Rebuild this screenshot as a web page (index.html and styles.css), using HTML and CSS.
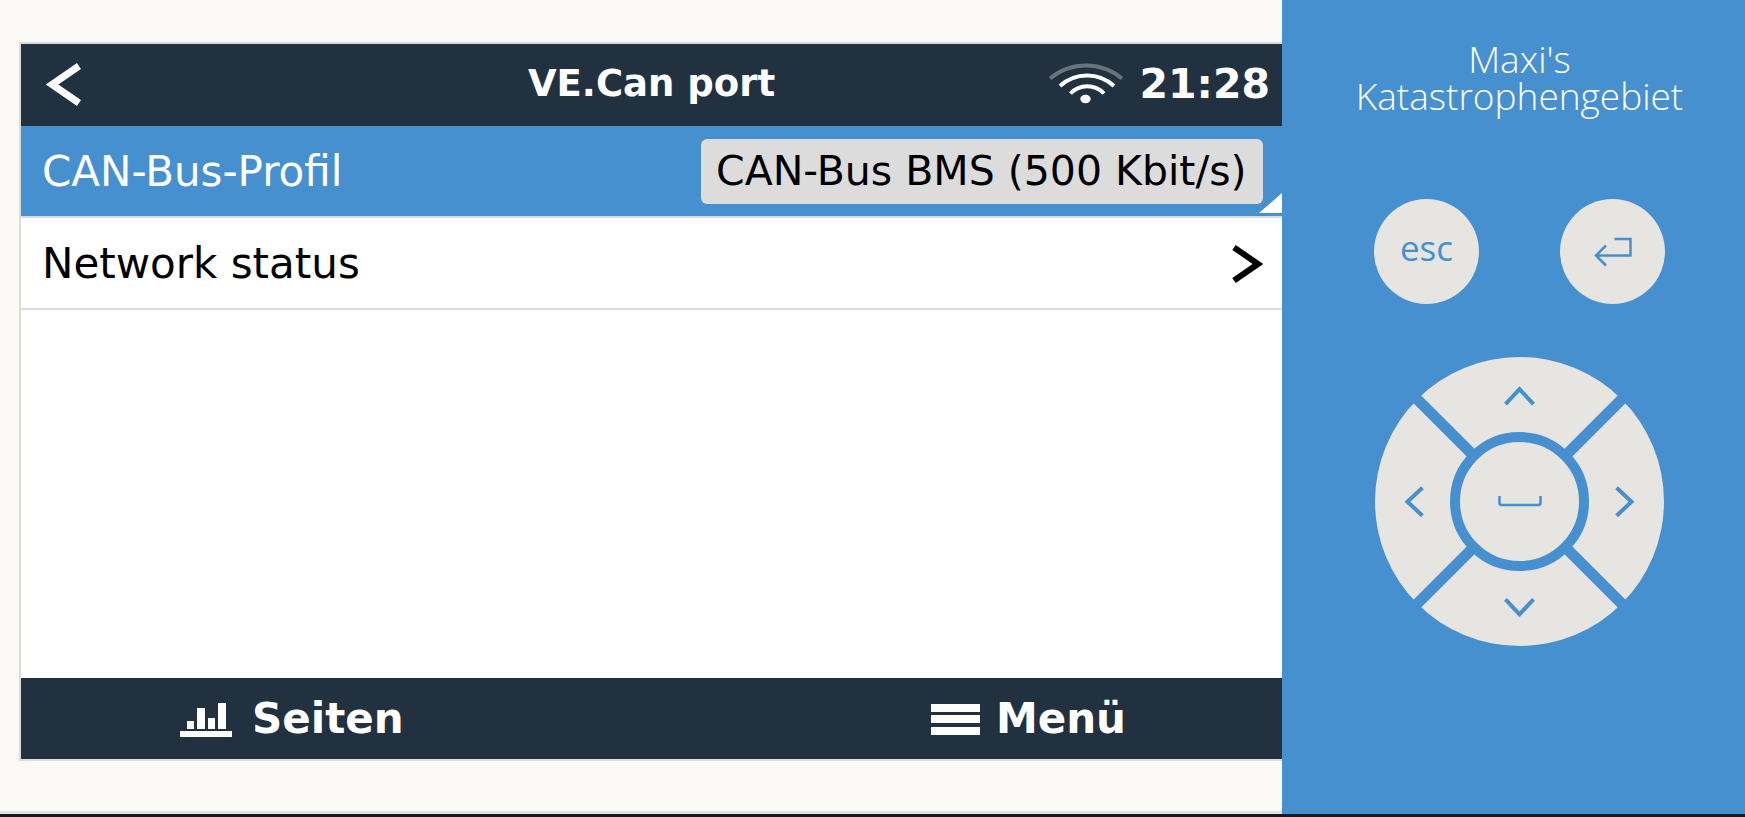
FILE: index.html
```
<!DOCTYPE html>
<html lang="de">
<head>
    <meta charset="UTF-8">
    <title>VE.Can port</title>
    <link rel="stylesheet" href="styles.css">
</head>
<body>
<div class="page">
    <main class="stage">
        <div class="screen">
            <header class="bar header">
                <button class="back" type="button" aria-label="Zurück">
                    <svg width="38" height="44" viewBox="0 0 38 44"><path d="M34 4L7 22.500L34 41" fill="none" stroke="#fff" stroke-width="7"/></svg>
                </button>
                <h1>VE.Can port</h1>
                <div class="status">
                    <svg width="78" height="48" viewBox="6 10 78 48" fill="none" stroke="#fff" stroke-width="4">
                        <path d="M9 28.500A56 56 0 0 1 81 28.500" stroke="#68737e"/>
                        <path d="M19 36A40 40 0 0 1 73 36"/>
                        <path d="M29.500 43.500A23 23 0 0 1 63 43.500"/>
                        <ellipse cx="44.500" cy="49" rx="5.200" ry="4.200" fill="#fff" stroke="none"/>
                    </svg>
                    <span class="clock">21:28</span>
                </div>
            </header>
            <ul class="list">
                <li class="row active">
                    <label for="profile">CAN-Bus-Profil</label>
                    <select id="profile" class="profile">
                        <option>CAN-Bus BMS (500 Kbit/s)</option>
                    </select>
                    <span class="corner"></span>
                </li>
                <li>
                    <a class="row" href="#network">
                        Network status
                        <svg width="32" height="40" viewBox="0 0 32 40"><path d="M3 4.500L27 21L3 37.500" fill="none" stroke="#000" stroke-width="6"/></svg>
                    </a>
                </li>
            </ul>
            <footer class="bar footer">
                <button type="button">
                    <svg width="56" height="36" viewBox="0 0 56 36" fill="#fff">
                        <rect x="7" y="20" width="7" height="8"/>
                        <rect x="17" y="7" width="8" height="21"/>
                        <rect x="28" y="17" width="7" height="11"/>
                        <rect x="38" y="2" width="8" height="26"/>
                        <rect x="0" y="30" width="52" height="6"/>
                    </svg>
                    Seiten
                </button>
                <button type="button">
                    <svg width="49" height="34" viewBox="0 0 49 34" fill="#fff">
                        <rect y="2" width="49" height="8"/>
                        <rect y="13" width="49" height="8"/>
                        <rect y="25" width="49" height="8"/>
                    </svg>
                    Menü
                </button>
            </footer>
        </div>
    </main>
    <aside class="keypad">
        <p class="name">Maxi's<br>Katastrophengebiet</p>
        <div class="keys">
            <button class="key esc" type="button">esc</button>
            <button class="key" type="button" aria-label="Enter">
                <svg width="38" height="30" viewBox="0 0 38 30"><path d="M20.500 2H36.500V18.500H2M12 8.500L2 18.500L12 28.500" fill="none" stroke="#4790d0" stroke-width="2.500"/></svg>
            </button>
        </div>
        <div class="dpad">
            <div class="ring">
                <button type="button" aria-label="Hoch"><svg width="32" height="32" viewBox="0 0 32 32"><path d="M2 24L16 9L30 24"/></svg></button>
                <button type="button" aria-label="Rechts"><svg width="32" height="32" viewBox="0 0 32 32"><path d="M7 1.500L22 15.500L7 29.500"/></svg></button>
                <button type="button" aria-label="Links"><svg width="32" height="32" viewBox="0 0 32 32"><path d="M25 1.500L10 15.500L25 29.500"/></svg></button>
                <button type="button" aria-label="Runter"><svg width="32" height="32" viewBox="0 0 32 32"><path d="M2 7L16 22L30 7"/></svg></button>
            </div>
            <button class="space" type="button" aria-label="Leertaste">
                <svg width="44" height="14" viewBox="0 0 44 14"><path d="M1.500 1V8Q1.500 10 3.500 10H40.500Q42.500 10 42.500 8V1" fill="none" stroke="#4790d0" stroke-width="2.500"/></svg>
            </button>
        </div>
    </aside>
</div>
</body>
</html>
```

FILE: styles.css
```
* {
    margin: 0;
    padding: 0;
    box-sizing: border-box;
}
body {
    font-family: "DejaVu Sans", sans-serif;
    font-size: 42px;
    background: #faf9f5;
}
button {
    border: none;
    background: none;
    color: inherit;
    font: inherit;
    cursor: pointer;
}
svg {
    display: block;
    flex: none;
}
.page {
    display: flex;
    min-height: 100vh;
    border-bottom: 3px solid #16191f;
}

/* display */
.stage {
    flex: 1;
    display: flex;
    padding: 42px 0 50px 19px;
    border-bottom: 3px solid #e4e3df;
}
.screen {
    flex: 1;
    display: flex;
    flex-direction: column;
    background: #fff;
    border: 2px solid #dadcdc;
    border-right: none;
}
.bar {
    height: 82px;
    background: #22313f;
    color: #fff;
    font-weight: bold;
}
.header {
    display: grid;
    grid-template-columns: 1fr auto 1fr;
    align-items: center;
    padding: 0 12px 3px;
}
.back {
    justify-self: start;
    padding-left: 12px;
}
.header h1 {
    font-size: 37px;
}
.status {
    justify-self: end;
    display: flex;
    align-items: center;
    gap: 14px;
}
.list {
    flex: 1;
    list-style: none;
}
.row {
    position: relative;
    display: flex;
    justify-content: space-between;
    align-items: center;
    height: 92px;
    padding: 0 19px 0 21px;
    border-bottom: 2px solid #dcdcdc;
    color: #000;
    text-decoration: none;
}
.active {
    background: #4790d0;
    color: #fff;
}
.profile {
    appearance: none;
    height: 65px;
    padding: 0 16px 0 15px;
    border: none;
    border-radius: 6px;
    background: #dcdcdc;
    color: #000;
    font: inherit;
}
.profile,
.clock {
    font-size: 41px;
}
.corner {
    position: absolute;
    right: 0;
    bottom: 3px;
    width: 23px;
    height: 20px;
    background: #fff;
    clip-path: polygon(100% 0, 100% 100%, 0 100%);
}
.footer {
    display: flex;
    justify-content: space-between;
    height: 81px;
    padding: 0 156px 0 159px;
}
.footer button {
    display: flex;
    align-items: center;
    gap: 16px;
}

/* keypad */
.keypad {
    width: 463px;
    display: flex;
    flex-direction: column;
    align-items: center;
    padding: 40px 0 40px 12px;
    background: #4790d0;
    color: #fff;
    font-family: "Open Sans", sans-serif;
}
.name {
    font-size: 37px;
    font-weight: 300;
    line-height: 37px;
    text-align: center;
}
.keys {
    display: flex;
    gap: 81px;
    margin: 85px 0 53px;
}
.key {
    display: flex;
    justify-content: center;
    align-items: center;
    width: 105px;
    height: 105px;
    border-radius: 50%;
    background: #e6e5e1;
    color: #4790d0;
}
.esc {
    padding-bottom: 8px;
    font-size: 35px;
    font-weight: 500;
}
.dpad {
    position: relative;
}
/* four quarters, turned so that the gaps form an X */
.ring {
    display: grid;
    grid-template-columns: 1fr 1fr;
    gap: 11px;
    width: 289px;
    height: 289px;
    border-radius: 50%;
    overflow: hidden;
    transform: rotate(45deg);
}
.ring button {
    display: flex;
    justify-content: center;
    align-items: center;
    background: #e6e5e1;
}
.ring svg {
    transform: rotate(-45deg);
    fill: none;
    stroke: #4790d0;
    stroke-width: 4;
}
.space {
    position: absolute;
    inset: 75px;
    display: flex;
    justify-content: center;
    align-items: center;
    border: 10px solid #4790d0;
    border-radius: 50%;
    background: #e6e5e1;
}
```
